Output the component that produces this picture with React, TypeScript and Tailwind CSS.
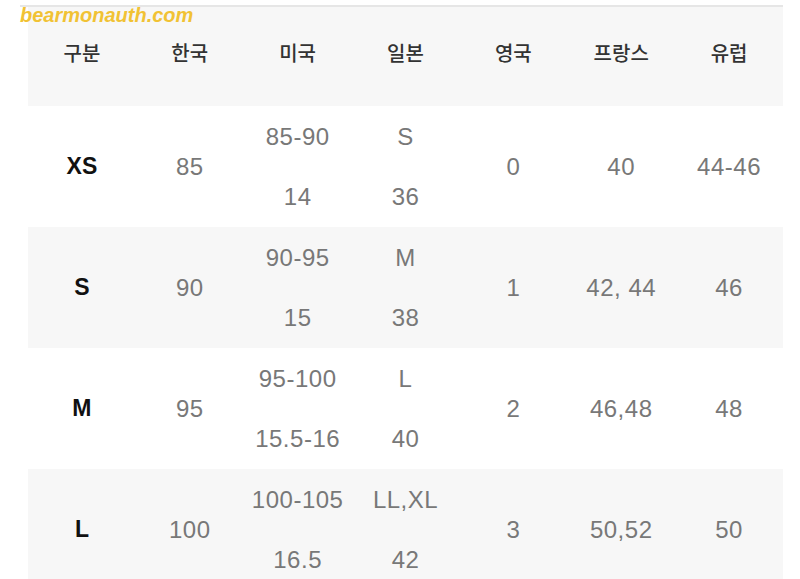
const headers = ["구분", "한국", "미국", "일본", "영국", "프랑스", "유럽"];

type Row = {
  size: string;
  kr: string;
  us: [string, string];
  jp: [string, string];
  uk: string;
  fr: string;
  eu: string;
};

const rows: Row[] = [
  { size: "XS", kr: "85", us: ["85-90", "14"], jp: ["S", "36"], uk: "0", fr: "40", eu: "44-46" },
  { size: "S", kr: "90", us: ["90-95", "15"], jp: ["M", "38"], uk: "1", fr: "42, 44", eu: "46" },
  { size: "M", kr: "95", us: ["95-100", "15.5-16"], jp: ["L", "40"], uk: "2", fr: "46,48", eu: "48" },
  { size: "L", kr: "100", us: ["100-105", "16.5"], jp: ["LL,XL", "42"], uk: "3", fr: "50,52", eu: "50" },
];

function Stack({ lines }: { lines: [string, string] }) {
  return (
    <div className="flex flex-col items-center leading-[60px]">
      <span>{lines[0]}</span>
      <span>{lines[1]}</span>
    </div>
  );
}

export default function App() {
  return (
    <div className="relative h-[579px] w-[800px] overflow-hidden bg-white">
      {/* watermark */}
      <div className="absolute left-[20px] top-0 z-10 text-[20px] font-bold italic text-[#f1c234] [font-family:'Liberation_Sans',Arial,sans-serif]">
        bearmonauth.com
      </div>

      <div className="pt-[5px]">
        <div className="ml-[20px] h-[2px] w-[763px] bg-[#e6e6e6]" />
        <div className="ml-[28px] w-[755px]">
          <div className="grid h-[99px] grid-cols-7 items-center bg-[#f7f7f7] pb-[7px] text-[20px] font-medium text-[#333] [font-family:'Noto_Sans_CJK_KR',sans-serif]">
            {headers.map((h) => (
              <div key={h} className="text-center">
                {h}
              </div>
            ))}
          </div>

          {rows.map((r, i) => (
            <div
              key={r.size}
              className={`grid h-[121px] grid-cols-7 items-center text-center text-[24px] tracking-[0.5px] text-[#787878] [font-family:'Liberation_Sans',Arial,sans-serif] ${
                i % 2 === 1 ? "bg-[#f7f7f7]" : "bg-white"
              }`}
            >
              <div className="text-[23px] font-semibold tracking-normal text-[#111]">{r.size}</div>
              <div>{r.kr}</div>
              <Stack lines={r.us} />
              <Stack lines={r.jp} />
              <div>{r.uk}</div>
              <div>{r.fr}</div>
              <div>{r.eu}</div>
            </div>
          ))}
        </div>
      </div>
    </div>
  );
}
